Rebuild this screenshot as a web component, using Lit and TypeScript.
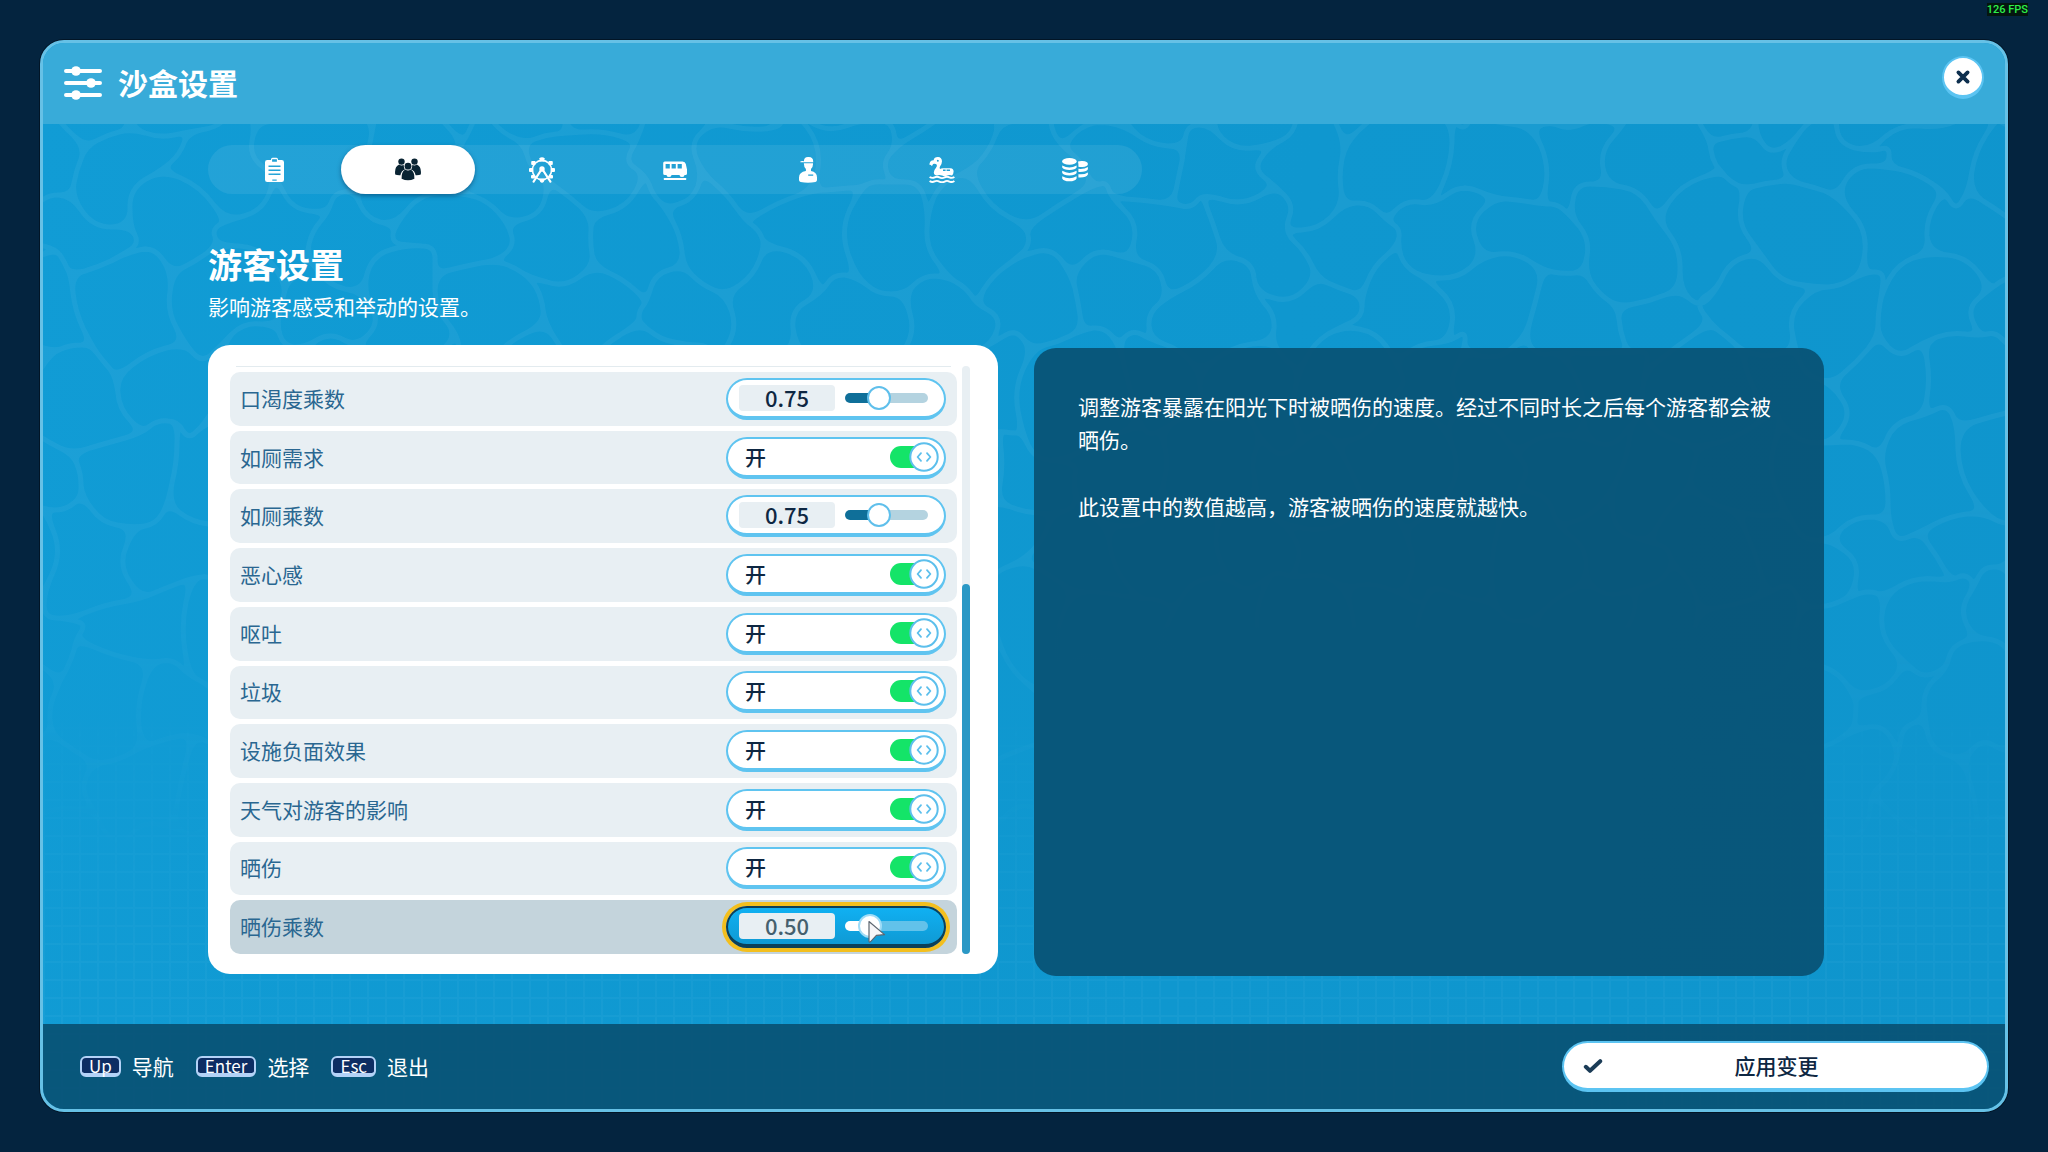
import { LitElement, html, css, svg, type TemplateResult } from "lit";
import { customElement, property, state } from "lit/decorators.js";
import { classMap } from "lit/directives/class-map.js";
import { styleMap } from "lit/directives/style-map.js";

const FONT = css`"Noto Sans CJK SC", "Noto Sans", sans-serif`;

/* ---------- icons ---------- */

const icons: Record<string, TemplateResult> = {
  general: html`<svg viewBox="0 0 26 26" width="26" height="26" aria-hidden="true">
    <path fill="currentColor" fill-rule="evenodd" d="M9 3V2.4Q9 .8 10.600 .8h3.800q1.600 0 1.600 1.600V3h3.700q2.300 0 2.300 2.300v17.400q0 2.300-2.300 2.300H5.300q-2.300 0-2.300-2.300V5.300Q3 3 5.300 3zM10.100 2.300v2.400h4.800V2.300zM6.500 8.600v1.300h12V8.600zM6.500 12.600v1.300h12v-1.300zM6.500 16.600v1.300h12v-1.300zM10.300 22.400v1.300h4.400v-1.300z"/>
  </svg>`,
  guests: html`<svg viewBox="0 0 26 26" width="26" height="26" aria-hidden="true">
    <g fill="currentColor">
      <circle cx="6.500" cy="4.600" r="3.200"/>
      <circle cx="19.500" cy="4.600" r="3.200"/>
      <path d="M4.200 7.600Q6.600 9.200 8.700 7.800Q8.600 10.800 10 12.400Q6.200 13.600 5.400 18.200Q2 18.400 .2 17.400Q-.8 10 4.200 7.600z"/>
      <path d="M21.800 7.600Q19.400 9.200 17.300 7.800Q17.400 10.800 16 12.400Q19.800 13.600 20.600 18.200Q24 18.400 25.800 17.400Q26.800 10 21.800 7.600z"/>
      <circle cx="13" cy="9.200" r="3.400"/>
      <path d="M10.200 12.600Q13 14.400 15.800 12.600Q19.800 14.800 19.400 21.800Q13 24.800 6.600 21.800Q6.200 14.800 10.200 12.600z"/>
    </g>
  </svg>`,
  rides: html`<svg viewBox="0 0 26 26" width="26" height="26" aria-hidden="true">
    <circle cx="13" cy="13" r="9.600" fill="none" stroke="currentColor" stroke-width="1.600"/>
    <g fill="currentColor">
      <path d="M10.200 1.200Q13-.8 15.800 1.200L15 4.600H11zM10.200 22Q13 21 15.800 22Q15.200 25.400 13 25.800Q10.800 25.400 10.200 22z"/>
      <rect x="0" y="11" width="4.200" height="4" rx="1"/>
      <rect x="21.800" y="11" width="4.200" height="4" rx="1"/>
      <rect x="2.200" y="4" width="4.400" height="4" rx="1"/>
      <rect x="19.400" y="4" width="4.400" height="4" rx="1"/>
      <rect x="2" y="18" width="4" height="3.600" rx="1"/>
      <rect x="20" y="18" width="4" height="3.600" rx="1"/>
      <circle cx="13" cy="12" r="2.700"/>
    </g>
    <path d="M12.400 12.600L4.600 24.600M13.600 12.600L21.400 24.600" fill="none" stroke="currentColor" stroke-width="2.100" stroke-linecap="round"/>
  </svg>`,
  transport: html`<svg viewBox="0 0 26 26" width="26" height="26" aria-hidden="true">
    <path fill="currentColor" fill-rule="evenodd" d="M2.800 4.400h17.800q2.600 0 3.200 2.600l1.200 5.400v4q0 1.600-1.600 1.600H2.800q-1.600 0-1.600-1.600V6Q1.200 4.400 2.800 4.400zM3.600 7v4.400h4.200V7zM9.600 7v4.400h4.200V7zM15.600 7v4.400h4.200V7z"/>
    <circle cx="7" cy="17.600" r="2.500" fill="currentColor"/>
    <circle cx="20" cy="17.600" r="2.500" fill="currentColor"/>
    <rect x="1.800" y="21" width="22.400" height="2" rx=".6" fill="currentColor"/>
  </svg>`,
  staff: html`<svg viewBox="0 0 26 26" width="26" height="26" aria-hidden="true">
    <path fill="currentColor" d="M9 4.200Q8.800.2 13 0Q18.200-.2 18.200 4.400V5.200H5.400Q4.600 3.800 9 4.200z"/>
    <path fill="currentColor" fill-rule="evenodd" d="M8.900 6.200H18Q18.300 10 16 12V14Q22 15 22 20.600V23Q22 24.600 20.400 25Q13 26.600 5.600 25Q4 24.600 4 23V20.600Q4 15 10.900 14V12Q8.700 10 8.900 6.200zM13.200 17.400v1.400h5v-1.400z"/>
  </svg>`,
  pool: html`<svg viewBox="0 0 26 26" width="26" height="26" aria-hidden="true">
    <path fill="currentColor" fill-rule="evenodd" d="M.4 7.800Q.4 3.400 4.600 3.200Q5.200 0 9 .1Q12.800.4 13 4.200Q13 6.600 11 9.600Q10.200 11 11 12Q12 11.200 14 11.200H21.600Q24.600 11.400 24.600 14.600Q24.600 17 23 18.600Q20.400 17.200 18.200 18.600Q16 20 13 18.600Q10.400 17.200 8 18.600Q5 18.200 4.800 15.400Q4.800 13.400 7 10.800Q8.600 8.600 7.600 7.400Q6.200 6.200 4 7Q3.800 8.400 2.600 9Q2.200 7.600 .4 7.800zM8.800 2.800a.9.900 0 1 0 .1 0zM14 12.600v1.300h2.600v-1.300zM17.600 12.600v1.300h3.400v-1.300z"/>
    <path d="M.6 20Q3.200 21.600 5.600 20.400Q8 19.200 10.400 20.400Q13 21.800 15.600 20.400Q18 19.200 20.400 20.400Q23 21.600 25.400 20M.6 24Q3.200 25.800 5.600 24.400Q8 23.200 10.400 24.600Q13 26 15.600 24.600Q18 23.200 20.400 24.600Q23 25.800 25.400 24" fill="none" stroke="currentColor" stroke-width="1.900"/>
  </svg>`,
  finance: html`<svg viewBox="0 0 26 26" width="26" height="26" aria-hidden="true">
    <g fill="currentColor">
      <ellipse cx="7.400" cy="4.400" rx="7.300" ry="3.400"/>
      <path d="M.2 8.400Q7.400 12.600 14.600 8.400V10.600Q13.400 13 7.400 13Q1.400 13 .2 10.600z"/>
      <path d="M.2 13.800Q7.400 18 14.600 13.800V16Q13.400 18.400 7.400 18.400Q1.400 18.400 .2 16z"/>
      <path d="M.2 19.200Q7.400 23.400 14.600 19.200V21.400Q13.400 24.200 7.400 24.200Q1.400 24.200 .2 21.400z"/>
      <path d="M16 4.600Q18 3.800 20.400 4Q25.900 4.400 25.900 7Q25.900 9.600 20.400 10Q18 10.100 16.400 9.700V7z"/>
      <path d="M16.400 11.800Q22.400 12.400 25.900 10V12.200Q24.400 15.200 16.400 14.900z"/>
      <path d="M16.400 17.200Q22.400 17.800 25.900 15.400V17.600Q24.400 20.800 16.400 20.400z"/>
    </g>
  </svg>`,
};

/* ---------- water backdrop ---------- */

const CELL_W = 90;
const CELL_H = 78;

function noise(a: number, b: number, salt: number): number {
  const s = Math.sin(a * 127.1 + b * 311.7 + salt * 74.7) * 43758.5453;
  return (s - Math.floor(s)) * 2 - 1;
}

type Point = [number, number];

function corner(r: number, k: number): Point {
  const lift = Math.abs(k - r) % 2 === 0 ? 10 : -10;
  return [(k * CELL_W) / 2 + noise(r, k, 1) * 20, r * CELL_H + lift + noise(r, k, 2) * 23];
}

function bend(r1: number, k1: number, r2: number, k2: number): Point {
  const a = corner(r1, k1);
  const b = corner(r2, k2);
  const w = noise(r1 + r2, k1 + k2, 3) * 20;
  const len = Math.hypot(b[0] - a[0], b[1] - a[1]) || 1;
  return [(a[0] + b[0]) / 2 - ((b[1] - a[1]) / len) * w, (a[1] + b[1]) / 2 + ((b[0] - a[0]) / len) * w];
}

function cellPath(r: number, c: number): string {
  const k = 2 * c + (r % 2);
  const ring: Point[] = [
    corner(r, k), bend(r, k, r, k + 1),
    corner(r, k + 1), bend(r, k + 1, r, k + 2),
    corner(r, k + 2), bend(r, k + 2, r + 1, k + 2),
    corner(r + 1, k + 2), bend(r + 1, k + 1, r + 1, k + 2),
    corner(r + 1, k + 1), bend(r + 1, k, r + 1, k + 1),
    corner(r + 1, k), bend(r, k, r + 1, k),
  ];
  const mid = (p: Point, q: Point) => `${Math.round((p[0] + q[0]) / 2)} ${Math.round((p[1] + q[1]) / 2)}`;
  let d = `M${mid(ring[11], ring[0])}`;
  ring.forEach((p, i) => {
    d += `Q${Math.round(p[0])} ${Math.round(p[1])} ${mid(p, ring[(i + 1) % 12])}`;
  });
  return d + "z";
}

const cells: string[] = [];
for (let r = 0; r < 13; r++) for (let c = -1; c < 23; c++) cells.push(cellPath(r, c));
const cellsPath = cells.join("");

@customElement("water-backdrop")
export class WaterBackdrop extends LitElement {
  static styles = css`
    :host { display: block; }
    .water { display: block; width: 100%; height: 100%; }
  `;

  render() {
    return html`<svg class="water" viewBox="0 0 1962 1066" preserveAspectRatio="xMidYMid slice" aria-hidden="true">
      <defs>
        <linearGradient id="fade" gradientUnits="userSpaceOnUse" x1="0" y1="0" x2="0" y2="1066">
          <stop offset="0" stop-color="#fff"/>
          <stop offset=".4" stop-color="#fff"/>
          <stop offset=".78" stop-color="#000"/>
        </linearGradient>
        <linearGradient id="rise" x1="0" y1="0" x2="0" y2="1">
          <stop offset=".6" stop-color="#000"/>
          <stop offset=".95" stop-color="#fff"/>
        </linearGradient>
        <mask id="web" maskUnits="userSpaceOnUse" x="0" y="0" width="1962" height="1066">
          <rect width="1962" height="1066" fill="url(#fade)"/>
          ${svg`<path d=${cellsPath} fill="#000" stroke="url(#fade)" stroke-width="5"/>`}
        </mask>
        <mask id="floor" maskUnits="userSpaceOnUse" x="0" y="0" width="1962" height="1066">
          <rect width="1962" height="1066" fill="url(#rise)"/>
        </mask>
        <pattern id="tiles" width="18" height="18" patternUnits="userSpaceOnUse">
          <path d="M0 1H18M1 0V18" stroke="#7cc9ea" stroke-width="2"/>
        </pattern>
      </defs>
      <g opacity=".1">
        <rect width="1962" height="1066" fill="#7cc9ea" mask="url(#web)"/>
      </g>
      <rect width="1962" height="1066" fill="url(#tiles)" opacity=".08" mask="url(#floor)"/>
    </svg>`;
  }
}

/* ---------- controls ---------- */

@customElement("setting-slider")
export class SettingSlider extends LitElement {
  @property() label = "";
  @property({ type: Number }) value = 0;
  @property({ type: Boolean, reflect: true }) active = false;

  static styles = css`
    :host { display: block; }
    .pill {
      box-sizing: border-box; width: 220px; height: 42px; border-radius: 21px;
      border: 2px solid #5fc4f0; border-bottom-width: 4px; background: #fff;
      display: flex; align-items: center; gap: 10px; padding: 0 16px 0 11px;
    }
    .number {
      box-sizing: border-box; width: 96px; height: 26px; border: 0; border-radius: 4px; padding: 0 0 2px;
      background: #e8eff3; color: #0e2742; text-align: center;
      font: 500 22px/24px ${FONT};
    }
    .range {
      appearance: none; flex: 1; min-width: 0; height: 24px; margin: 0; background: none;
    }
    .range::-webkit-slider-runnable-track {
      height: 10px; border-radius: 5px;
      background: linear-gradient(to right, #0f6f99 var(--fill), #b4d3e0 var(--fill));
    }
    .range::-webkit-slider-thumb {
      appearance: none; box-sizing: border-box; width: 24px; height: 24px; margin-top: -7px;
      border: 2px solid #5fbfeb; border-radius: 50%; background: #fff;
    }
    .active {
      border-color: #0c4058; background: linear-gradient(#10b0f2, #0f9ad4);
      box-shadow: 0 0 0 4px #f3bf1e;
    }
    .active .number { color: #45606e; }
    .active .range::-webkit-slider-runnable-track {
      background: linear-gradient(to right, #fff var(--fill), #62c2ea var(--fill));
    }
    .active .range::-webkit-slider-thumb { border-color: #9fdcf7; }
  `;

  render() {
    const fill = 15 + ((this.value - 0.15) / 1.6) * 70;
    return html`<div class=${classMap({ pill: true, active: this.active })}>
      <input class="number" type="text" aria-label=${this.label} .value=${this.value.toFixed(2)}>
      <input class="range" type="range" min="0.15" max="1.75" step="0.05" aria-label=${this.label}
        style=${styleMap({ "--fill": `${fill}%` })}
        .value=${String(this.value)}
        @input=${(e: Event) => { this.value = Number((e.target as HTMLInputElement).value); }}>
    </div>`;
  }
}

@customElement("setting-switch")
export class SettingSwitch extends LitElement {
  @property() label = "";
  @property({ type: Boolean }) on = true;

  static styles = css`
    :host { display: block; }
    .pill {
      box-sizing: border-box; width: 220px; height: 42px; border-radius: 21px;
      border: 2px solid #5fc4f0; border-bottom-width: 4px; background: #fff;
      display: flex; align-items: center; justify-content: space-between; padding: 0 5px 0 17px;
      color: #0e2742; font: 500 21px/30px ${FONT};
    }
    .state { padding-bottom: 2px; }
    .switch { display: grid; align-items: center; width: 49px; height: 30px; }
    .box, .knob { grid-area: 1 / 1; }
    .box {
      appearance: none; width: 44px; height: 22px; margin: 0; border-radius: 11px; background: #b4d3e0;
    }
    .box:checked { background: #14e468; }
    .knob { pointer-events: none; justify-self: start; display: block; }
    .box:checked + .knob { justify-self: end; }
  `;

  render() {
    return html`<label class="pill">
      <span class="state">${this.on ? "开" : "关"}</span>
      <span class="switch">
        <input class="box" type="checkbox" role="switch" aria-label=${this.label} .checked=${this.on}
          @change=${(e: Event) => { this.on = (e.target as HTMLInputElement).checked; }}>
        <svg class="knob" width="30" height="30" viewBox="0 0 30 30" aria-hidden="true">
          <circle cx="15" cy="15" r="13.700" fill="#fff" stroke="#5cbfec" stroke-width="2"/>
          <path d="M12 11.200L8.600 15l3.400 3.800M18 11.200L21.400 15 18 18.800" fill="none" stroke="#5cbfec" stroke-width="1.800" stroke-linecap="round" stroke-linejoin="round"/>
        </svg>
      </span>
    </label>`;
  }
}

/* ---------- page ---------- */

interface Setting {
  name: string;
  value?: number;
}

const settings: Setting[] = [
  { name: "口渴度乘数", value: 0.75 },
  { name: "如厕需求" },
  { name: "如厕乘数", value: 0.75 },
  { name: "恶心感" },
  { name: "呕吐" },
  { name: "垃圾" },
  { name: "设施负面效果" },
  { name: "天气对游客的影响" },
  { name: "晒伤" },
  { name: "晒伤乘数", value: 0.5 },
];

const tabs = [
  ["general", "常规"],
  ["guests", "游客"],
  ["rides", "游乐设施"],
  ["transport", "交通"],
  ["staff", "员工"],
  ["pool", "泳池"],
  ["finance", "财务"],
];

const hints = [
  ["Up", "导航"],
  ["Enter", "选择"],
  ["Esc", "退出"],
];

@customElement("app-root")
export class AppRoot extends LitElement {
  @state() private tab = "guests";
  @state() private selected = 9;

  static styles = css`
    :host { display: block; font-family: ${FONT}; }
    button { font: inherit; cursor: pointer; }
    .page {
      position: relative; box-sizing: border-box; min-height: 100vh; padding: 40px;
      display: flex; background: #04243f;
    }
    .fps {
      position: absolute; top: 3px; right: 20px; color: #2df04a; background: #04160f;
      font: 500 11px/13px Roboto, sans-serif;
    }
    .dialog {
      position: relative; flex: 1; display: flex; flex-direction: column; overflow: hidden;
      border: 3px solid #66c1e6; border-radius: 24px;
      background: linear-gradient(100deg, #119cd5, #0f97cf 60%, #0f95cd);
      box-shadow: 0 0 0 1px #021526;
    }
    .backdrop { position: absolute; inset: 0; }
    .header, .main, .footer { position: relative; }
    .header {
      display: flex; align-items: flex-start; gap: 16px; box-sizing: border-box; height: 81px;
      padding: 13px 21px; background: #38abd9;
    }
    .sliders { margin-top: 10px; }
    .title {
      flex: 1; margin: 4px 0 0; color: #fff; font-size: 30px; line-height: 44px; font-weight: 700;
    }
    .close {
      box-sizing: border-box; width: 42px; height: 43px; padding: 0; border-radius: 50%;
      border: 2px solid #5cc4f2; border-bottom-width: 4px; background: #fff; color: #0e2f4e;
      display: grid; place-items: center;
    }
    .main {
      flex: 1; display: flex; flex-direction: column; padding: 21px 181px 48px 165px;
    }
    .tabs {
      width: 59%; max-width: 934px; display: grid; grid-template-columns: repeat(7, 1fr);
      border-radius: 25px; background: rgba(255, 255, 255, 0.08);
    }
    .tab {
      height: 49px; padding: 0; border: 0; border-radius: 25px; background: none; color: #fff;
      display: grid; place-items: center;
    }
    .tab.current { background: #fff; color: #0a2433; box-shadow: 0 2px 4px rgba(0, 50, 90, 0.5); }
    .heading { margin: 48px 0 0; color: #fff; font-size: 34px; line-height: 44px; font-weight: 700; }
    .lead { margin: 6px 0 25px; color: #fff; font-size: 21px; line-height: 28px; }
    .columns { flex: 1; display: grid; grid-template-columns: 1fr 1fr; gap: 36px; }
    .card {
      display: flex; gap: 5px; margin-bottom: 2px; padding: 21px 28px 20px 22px;
      border-radius: 22px; background: #fff;
    }
    .list { flex: 1; display: flex; flex-direction: column; gap: 5px; }
    .previous { height: 1px; margin: 0 6px; background: #e3ebef; }
    .row {
      flex: 1; display: flex; align-items: center; justify-content: space-between;
      min-height: 52px; padding: 0 11px 0 10px; border-radius: 10px; background: #e8eff3;
      color: #2a6791; font-size: 21px; line-height: 30px;
    }
    .row.selected { background: #c4d4dc; }
    .name { padding-bottom: 2px; }
    .bar { display: flex; align-items: flex-end; width: 8px; border-radius: 4px; background: #e8eff3; }
    .thumb { width: 8px; height: 63%; border-radius: 4px; background: #2a98c5; }
    .info {
      margin-top: 3px; padding: 42px 44px; border-radius: 22px; background: rgba(8, 80, 114, 0.91);
      color: #fff; font-size: 21px; line-height: 33px;
    }
    .info p { margin: 0 0 34px; }
    .footer {
      display: flex; align-items: center; justify-content: space-between; box-sizing: border-box;
      height: 85px; padding: 0 16px 0 37px; background: rgba(8, 80, 114, 0.91);
    }
    .hints { display: flex; gap: 22px; margin: 0; padding: 0; list-style: none; }
    .hint {
      display: flex; align-items: center; gap: 11px; color: #fff; font-size: 21px; line-height: 30px;
    }
    .key {
      box-sizing: border-box; height: 21px; padding: 0 7px; border: 2px solid #b3d2f7;
      border-bottom-width: 4px; border-radius: 6px; background: #0d2d63; color: #fff;
      font: 400 17px/16px ${FONT};
    }
    .action { padding-bottom: 2px; }
    .apply {
      box-sizing: border-box; width: 427px; height: 51px; padding: 0 17px 0 19px; border-radius: 26px;
      border: 2px solid #5cc4f2; border-bottom-width: 4px; background: #fff; color: #0e2742;
      display: grid; grid-template-columns: 20px 1fr 20px; align-items: center;
      font-size: 21px; line-height: 30px; font-weight: 500;
    }
    .cursor { position: absolute; left: 867px; top: 920px; }
  `;

  render() {
    return html`<div class="page">
      <section class="dialog">
        <water-backdrop class="backdrop"></water-backdrop>
        <header class="header">
          <svg class="sliders" width="38" height="34" viewBox="0 0 38 34" aria-hidden="true">
            <path d="M2 5H36M2 17H36M2 29H36" stroke="#fff" stroke-width="4" stroke-linecap="round"/>
            <circle cx="12" cy="5" r="4.800" fill="#fff"/>
            <circle cx="27" cy="17" r="4.800" fill="#fff"/>
            <circle cx="12" cy="29" r="4.800" fill="#fff"/>
          </svg>
          <h1 class="title">沙盒设置</h1>
          <button class="close" aria-label="关闭">
            <svg width="16" height="16" viewBox="0 0 16 16" aria-hidden="true">
              <path d="M3.400 3.400L12.600 12.600M12.600 3.400L3.400 12.600" stroke="currentColor" stroke-width="3.800" stroke-linecap="round"/>
            </svg>
          </button>
        </header>
        <main class="main">
          <div class="tabs" role="tablist">
            ${tabs.map(([id, label]) => html`<button role="tab" aria-label=${label}
              aria-selected=${this.tab === id ? "true" : "false"}
              class=${classMap({ tab: true, current: this.tab === id })}
              @click=${() => { this.tab = id; }}>${icons[id]}</button>`)}
          </div>
          <h2 class="heading">游客设置</h2>
          <p class="lead">影响游客感受和举动的设置。</p>
          <div class="columns">
            <div class="card">
              <div class="list">
                <div class="previous"></div>
                ${settings.map((s, i) => html`<div
                  class=${classMap({ row: true, selected: this.selected === i })}
                  @click=${() => { this.selected = i; }}>
                  <span class="name">${s.name}</span>
                  ${s.value === undefined
                    ? html`<setting-switch .label=${s.name}></setting-switch>`
                    : html`<setting-slider .label=${s.name} .value=${s.value} .active=${this.selected === i}></setting-slider>`}
                </div>`)}
              </div>
              <div class="bar"><div class="thumb"></div></div>
            </div>
            <aside class="info">
              <p>调整游客暴露在阳光下时被晒伤的速度。经过不同时长之后每个游客都会被晒伤。</p>
              <p>此设置中的数值越高，游客被晒伤的速度就越快。</p>
            </aside>
          </div>
        </main>
        <footer class="footer">
          <ul class="hints">
            ${hints.map(([key, label]) => html`<li class="hint"><kbd class="key">${key}</kbd><span class="action">${label}</span></li>`)}
          </ul>
          <button class="apply">
            <svg width="20" height="16" viewBox="0 0 20 16" aria-hidden="true">
              <path d="M2.800 8.800L7 12.800L17.200 3.200" fill="none" stroke="#1b3c57" stroke-width="4" stroke-linecap="round" stroke-linejoin="round"/>
            </svg>
            <span class="action">应用变更</span>
          </button>
        </footer>
      </section>
      <div class="fps">126 FPS</div>
      <svg class="cursor" width="20" height="24" viewBox="0 0 20 24" aria-hidden="true">
        <path d="M2 1.500L17.500 14.600L9.400 15.400L3.400 21.800Q2 22.600 2 20.800z" fill="#f6f6f8" stroke="#5d6670" stroke-width="1.200" stroke-linejoin="round"/>
      </svg>
    </div>`;
  }
}
